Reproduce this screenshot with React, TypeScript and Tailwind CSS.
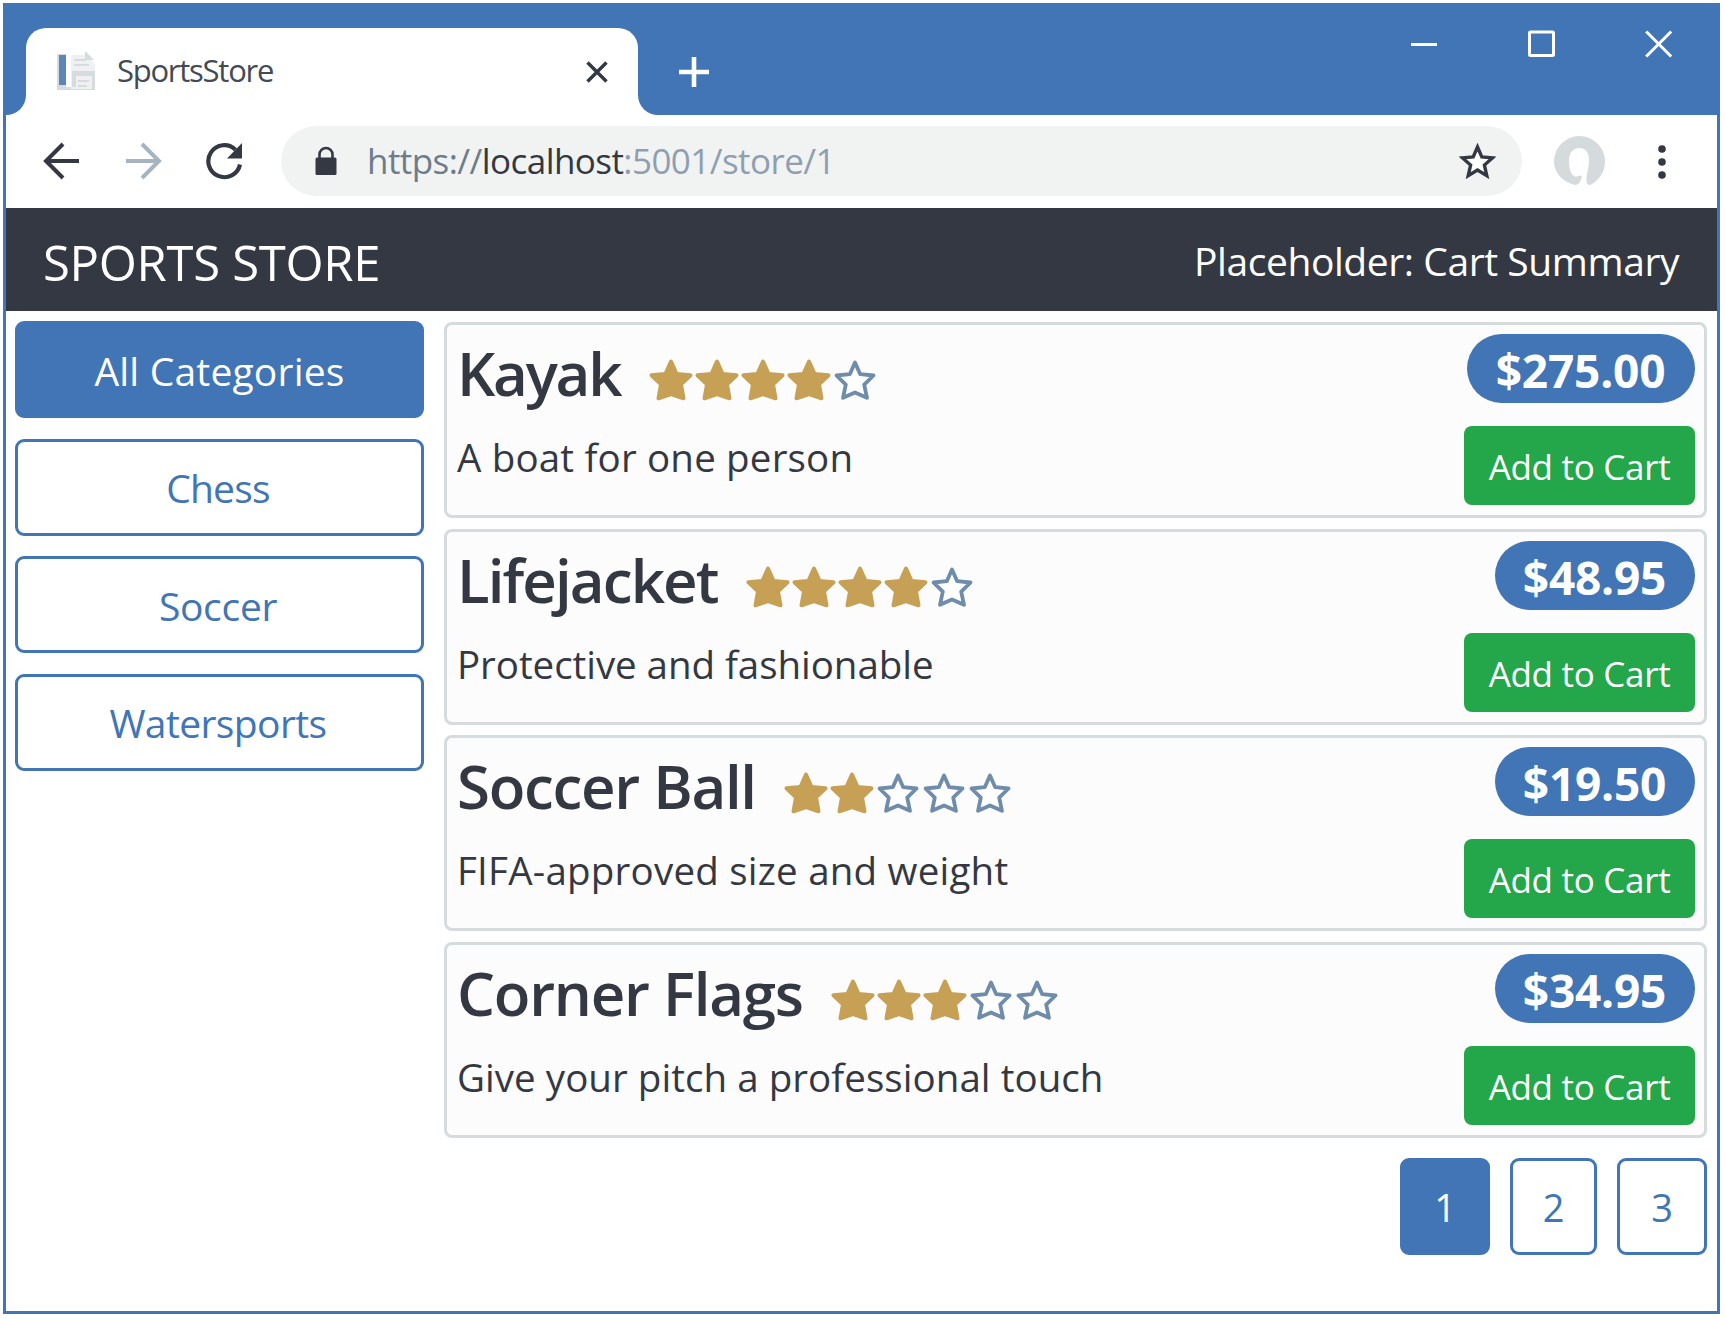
import React from "react";

type Product = {
  name: string;
  nameClass: string;
  description: string;
  descriptionClass: string;
  rating: number;
  price: string;
  priceClass: string;
};

const products: Product[] = [
  {
    name: "Kayak",
    nameClass: "w-[191px] tracking-[-2.2px]",
    description: "A boat for one person",
    descriptionClass: "tracking-[0.18px]",
    rating: 4,
    price: "$275.00",
    priceClass: "w-[228px]",
  },
  {
    name: "Lifejacket",
    nameClass: "w-[288px] tracking-[-1.9px]",
    description: "Protective and fashionable",
    descriptionClass: "tracking-[-0.05px]",
    rating: 4,
    price: "$48.95",
    priceClass: "w-[200px]",
  },
  {
    name: "Soccer Ball",
    nameClass: "w-[326px] tracking-[-1.3px]",
    description: "FIFA-approved size and weight",
    descriptionClass: "tracking-[0.23px]",
    rating: 2,
    price: "$19.50",
    priceClass: "w-[200px]",
  },
  {
    name: "Corner Flags",
    nameClass: "w-[373px] tracking-[-1.25px]",
    description: "Give your pitch a professional touch",
    descriptionClass: "tracking-[0.05px]",
    rating: 3,
    price: "$34.95",
    priceClass: "w-[200px]",
  },
];

const categories = [
  { label: "All Categories", active: true, textClass: "tracking-[0.2px]" },
  { label: "Chess", active: false, textClass: "tracking-[-0.8px] pr-[3px]" },
  { label: "Soccer", active: false, textClass: "tracking-[-0.3px] pr-[3px]" },
  { label: "Watersports", active: false, textClass: "tracking-[-0.6px] pr-[3px]" },
];

function RatingStar({ filled }: { filled: boolean }) {
  return filled ? (
    <svg width="46" height="44" viewBox="0 0 46 44" className="block shrink-0">
      <path
        d="M23 3.5 L28.6 16 L42.5 17.2 L33 26.4 L35.5 40.3 L23 36 L10.5 40.3 L13 26.4 L3.5 17.2 L17.4 16 Z"
        fill="#c5a055"
        stroke="#c5a055"
        strokeWidth="4"
        strokeLinejoin="round"
      />
    </svg>
  ) : (
    <svg width="46" height="44" viewBox="0 0 46 44" className="block shrink-0">
      <path
        d="M23 4.5 L28.2 16.2 L41.5 17.5 L32.2 26.6 L35 39.8 L23 34.4 L11 39.8 L13.8 26.6 L4.500 17.5 L17.8 16.2 Z"
        fill="#ffffff"
        stroke="#6f8cab"
        strokeWidth="3.8"
        strokeLinejoin="round"
      />
    </svg>
  );
}

function TabStrip() {
  return (
    <div className="flex h-[112px] bg-[#4175b5]">
      <div className="h-5 w-5 self-end bg-white">
        <div className="h-5 w-5 rounded-br-[20px] bg-[#4175b5]" />
      </div>
      <div className="mt-[25px] flex h-[87px] w-[612px] items-center rounded-t-[20px] bg-white pl-[30px] pr-[30px]">
        <svg width="42" height="42" viewBox="0 0 42 42" className="shrink-0">
          <path d="M1 3h9v33h29v3H1z" fill="#d6dbde" />
          <rect x="3" y="4" width="7" height="30" fill="#5d86b8" />
          <path d="M15 4h15l9 9v25H15z" fill="#eef0f1" />
          <path d="M29 0l9 9h-9z" fill="#d6dbde" />
          <path d="M16 20h4v16h-4zM20 20h19v5H20zM36 25h3v13h-3zM18 8h12v2H18zM18 13h15v2H18z" fill="#d6dbde" />
          <path d="M22 29h11v2H22zM22 34h9v2h-9z" fill="#d6dbde" />
        </svg>
        <span className="ml-[19px] -mt-[3px] whitespace-nowrap text-[31px] leading-[40px] tracking-[-1.25px] text-[#444a53]">
          SportsStore
        </span>
        <svg width="22" height="22" viewBox="0 0 22 22" className="ml-auto shrink-0">
          <path d="M1.500 1.500l19 19M20.500 1.500l-19 19" stroke="#343842" strokeWidth="3.4" />
        </svg>
      </div>
      <div className="h-5 w-5 self-end bg-white">
        <div className="h-5 w-5 rounded-bl-[20px] bg-[#4175b5]" />
      </div>
      <svg width="32" height="32" viewBox="0 0 32 32" className="ml-[20px] mt-[53px] shrink-0">
        <path d="M16 1v30M1 16h30" stroke="#ffffff" strokeWidth="4.600" />
      </svg>
      <div className="ml-auto mr-[45px] mt-[27px] flex h-[28px]">
        <svg width="26" height="28" viewBox="0 0 26 28">
          <path d="M0 14.500h26" stroke="#ffffff" strokeWidth="3" />
        </svg>
        <svg width="27" height="28" viewBox="0 0 27 28" className="ml-[91px]">
          <rect x="1.500" y="2" width="24" height="23.500" rx="1" fill="none" stroke="#ffffff" strokeWidth="3" />
        </svg>
        <svg width="27" height="28" viewBox="0 0 27 28" className="ml-[90px]">
          <path d="M1.200 1.500l25 25M26.200 1.500l-25 25" stroke="#ffffff" strokeWidth="3" />
        </svg>
      </div>
    </div>
  );
}

function Toolbar() {
  return (
    <div className="flex h-[93px] items-center bg-white pb-[1px]">
      <svg width="37" height="38" viewBox="0 0 37 38" className="ml-[37px] shrink-0">
        <path d="M36 19H4M20 2L3 19l17 17" fill="none" stroke="#343842" strokeWidth="4" />
      </svg>
      <svg width="37" height="38" viewBox="0 0 37 38" className="ml-[45px] shrink-0">
        <path d="M1 19h32M17 2l17 17-17 17" fill="none" stroke="#a5b4c0" strokeWidth="4" />
      </svg>
      <svg width="38" height="38" viewBox="0 0 38 38" className="ml-[43px] shrink-0">
        <path d="M35 22.500A16 16 0 1 1 30.500 7.700" fill="none" stroke="#343842" strokeWidth="4.200" />
        <path d="M37 1v15.500H22z" fill="#343842" />
      </svg>
      <div className="ml-[38px] flex h-[70px] w-[1241px] items-center rounded-full bg-[#f1f3f3] pl-[34px] pr-[26px]">
        <svg width="22" height="30" viewBox="0 0 22 30" className="shrink-0">
          <path d="M4.500 13V8.500a6.500 6.500 0 0 1 13 0V13" fill="none" stroke="#343842" strokeWidth="2.600" />
          <rect x="0.500" y="11.500" width="21" height="17.500" rx="1.500" fill="#343842" />
        </svg>
        <span className="ml-[30px] whitespace-nowrap text-[35px] leading-[46px] tracking-[-0.57px] text-[#8f9faf]">
          <span className="text-[#6d7c8b]">https://</span>
          <span className="text-[#343842]">localhost</span>
          :5001/store/1
        </span>
        <svg width="37" height="36" viewBox="0 0 37 36" className="ml-auto shrink-0">
          <path
            d="M18.500 4l4.300 9.900 10.700 1-8.100 7.200 2.400 10.600-9.300-5.600-9.300 5.600 2.400-10.600-8.100-7.200 10.700-1z"
            fill="#ffffff"
            stroke="#343842"
            strokeWidth="3.400"
          />
        </svg>
      </div>
      <svg width="51" height="51" viewBox="0 0 51 51" className="ml-[32px] shrink-0">
        <path
          d="M21 49C9 46 0 37 0 25.500A25.500 25.500 0 0 1 51 25.500C51 36 45 45 36 49C32 49 32 44 33 38C34 33 35 30 35 24C35 16 31 12 25.500 12C19 12 15 17 15 25C15 33 17 38 20 40C23 42 26 38 28 40C27 45 25 49 21 49Z"
          fill="#d5dadd"
        />
      </svg>
      <svg width="8" height="34" viewBox="0 0 8 34" className="ml-[53px] mt-[2px] shrink-0">
        <circle cx="4" cy="4" r="3.800" fill="#343842" />
        <circle cx="4" cy="17" r="3.800" fill="#343842" />
        <circle cx="4" cy="30" r="3.800" fill="#343842" />
      </svg>
    </div>
  );
}

function ProductCard({ product }: { product: Product }) {
  return (
    <article className="flex h-[196px] justify-between rounded-[8px] border-[3px] border-[#d6dbdd] bg-[#fcfcfc] pl-[10px] pr-[9px]">
      <div>
        <div className="flex h-[96px] items-start">
          <h2
            className={`shrink-0 whitespace-nowrap pt-[6px] text-[60px] font-semibold leading-[84px] text-[#343842] ${product.nameClass}`}
          >
            {product.name}
          </h2>
          <div className="mt-[33px] flex">
            {[1, 2, 3, 4, 5].map((n) => (
              <RatingStar key={n} filled={n <= product.rating} />
            ))}
          </div>
        </div>
        <p className={`whitespace-nowrap pt-[10px] text-[38.500px] leading-[52px] text-[#343842] ${product.descriptionClass}`}>
          {product.description}
        </p>
      </div>
      <div className="flex flex-col items-end pt-[9px]">
        <span
          className={`flex h-[69px] items-center justify-center rounded-full bg-[#4175b5] pr-[1px] pt-[4px] text-[46px] font-bold leading-[65px] tracking-[-0.2px] text-white ${product.priceClass}`}
        >
          {product.price}
        </span>
        <button className="mt-[23px] h-[79px] w-[231px] whitespace-nowrap rounded-[8px] bg-[#23a74a] pt-[2px] text-[35px] leading-[77px] tracking-[-0.3px] text-white">
          Add to Cart
        </button>
      </div>
    </article>
  );
}

export default function App() {
  return (
    <div className="h-[1319px] w-[1725px] overflow-hidden bg-white pl-[3px] pt-[3px] font-['Open_Sans',sans-serif]">
      <div className="flex h-[1311px] w-[1717px] flex-col border-x-[3px] border-b-[3px] border-[#4175b5] bg-white">
        <TabStrip />
        <Toolbar />
        <header className="flex h-[103px] items-center justify-between bg-[#343842] pl-[37px] pr-[38px] pt-[3px] text-white">
          <h1 className="whitespace-nowrap pt-[2px] text-[49px] leading-[64px] tracking-[-0.3px]">SPORTS STORE</h1>
          <div className="whitespace-nowrap text-[39px] leading-[52px] tracking-[-0.43px]">Placeholder: Cart Summary</div>
        </header>
        <main className="flex pl-[9px] pr-[10px] pt-[10px]">
          <nav className="flex w-[409px] shrink-0 flex-col gap-[20.500px]">
            {categories.map((c) => (
              <button
                key={c.label}
                className={`h-[97px] rounded-[9px] border-[3px] border-[#4175b5] pt-[2px] text-[39px] leading-[50px] ${c.textClass} ${
                  c.active ? "bg-[#4175b5] text-white" : "bg-white text-[#4175b5]"
                }`}
              >
                {c.label}
              </button>
            ))}
          </nav>
          <section className="ml-[20px] flex grow flex-col pt-[1px]">
            <div className="flex flex-col gap-[10.700px]">
              {products.map((p) => (
                <ProductCard key={p.name} product={p} />
              ))}
            </div>
            <div className="mt-[20px] flex justify-end gap-[20px] text-[38px] leading-[50px]">
              <button className="h-[97px] w-[90px] rounded-[9px] border-[3px] border-[#4175b5] bg-[#4175b5] pt-[1px] text-white">1</button>
              <button className="h-[97px] w-[87px] rounded-[9px] border-[3px] border-[#4175b5] bg-white pt-[1px] text-[#4175b5]">2</button>
              <button className="h-[97px] w-[90px] rounded-[9px] border-[3px] border-[#4175b5] bg-white pt-[1px] text-[#4175b5]">3</button>
            </div>
          </section>
        </main>
      </div>
    </div>
  );
}
